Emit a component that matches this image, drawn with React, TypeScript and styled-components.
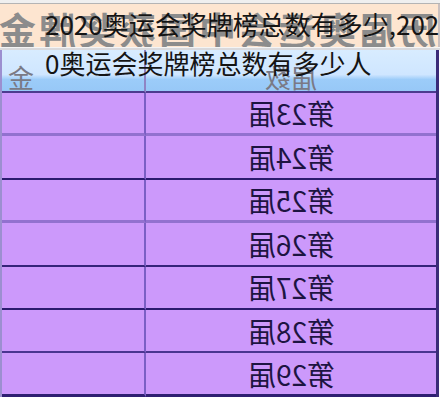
import React from "react";
import styled, { createGlobalStyle } from "styled-components";

const Global = createGlobalStyle`
  html, body { margin: 0; padding: 0; background: #ffffff; }
  body { font-family: "Noto Sans CJK SC", "Noto Sans", sans-serif; }
`;

const Frame = styled.div`
  position: relative;
  width: 440px;
  height: 400px;
  overflow: hidden;
  background: #ffffff;
  display: flex;
  flex-direction: column;
`;

const TopStrip = styled.div`
  height: 3px;
  background: #efefef;
  border-bottom: 1px solid #b4b4b4;
  flex: none;
`;

const Banner = styled.div`
  height: 43px;
  flex: none;
  background: #fde5d0;
  display: flex;
  align-items: center;
  overflow: hidden;
  border-right: 2px solid #c9c0c0;
`;

const Mirror = styled.span`
  display: inline-block;
  transform: scaleX(-1);
  white-space: nowrap;
`;

const BannerTitle = styled(Mirror)`
  font-family: "Noto Sans CJK SC", sans-serif;
  font-weight: 700;
  font-size: 37px;
  letter-spacing: 3px;
  color: #8c8c8c;
  margin-left: -4px;
  margin-top: 6px;
`;

const Separator = styled.div`
  height: 3px;
  flex: none;
  background: #d9d9dc;
  border-top: 1px solid #f4f4f4;
  box-sizing: border-box;
`;

const Table = styled.div`
  display: grid;
  grid-template-columns: 144px 1fr;
  border-left: 2px solid #9c8fd0;
  border-right: 3px solid #3a2b78;
  margin-right: 1px;
  flex: none;
`;

const HeadCell = styled.div<{ $first?: boolean }>`
  height: 43px;
  box-sizing: border-box;
  background: linear-gradient(#d8ecff 0%, #cfe6ff 60%, #9cccf9 72%, #97c8f7 100%);
  border-bottom: 2px solid #4d3b8f;
  border-right: ${(p) => (p.$first ? "2px solid #8f84c4" : "none")};
  display: flex;
  align-items: center;
  justify-content: ${(p) => (p.$first ? "flex-start" : "center")};
  overflow: hidden;
`;

const HeadText = styled(Mirror)`
  font-size: 26px;
  color: #7a7a86;
  line-height: 1;
  margin-top: 12px;
`;

const Cell = styled.div<{ $first?: boolean; $line: string; $w: number }>`
  height: 43.4px;
  box-sizing: border-box;
  background: #cc99fb;
  border-bottom: ${(p) => p.$w}px solid ${(p) => p.$line};
  border-right: ${(p) => (p.$first ? "2px solid #7b5fc4" : "none")};
  display: flex;
  align-items: center;
  justify-content: center;
`;

const CellText = styled(Mirror)`
  font-size: 28px;
  color: #1d1442;
  line-height: 1;
  margin-left: 2px;
`;

const Overlay = styled.div`
  position: absolute;
  top: 4px;
  left: 45px;
  right: 0;
  font-family: "Noto Sans CJK SC", sans-serif;
  font-size: 26px;
  line-height: 39px;
  color: #141414;
  word-break: break-all;
`;

const rows: { label: string; line: string; w: number }[] = [
  { label: "第23届", line: "#9271cf", w: 3 },
  { label: "第24届", line: "#2b1b6e", w: 2 },
  { label: "第25届", line: "#9271cf", w: 3 },
  { label: "第26届", line: "#35247a", w: 2 },
  { label: "第27届", line: "#2b1b6e", w: 2 },
  { label: "第28届", line: "#4a3590", w: 2 },
  { label: "第29届", line: "#2f1f72", w: 3 },
];

export default function App() {
  return (
    <Frame>
      <Global />
      <TopStrip />
      <Banner>
        <BannerTitle>历届奥运会中国获奖牌金</BannerTitle>
      </Banner>
      <Separator />
      <Table>
        <HeadCell $first>
          <HeadText style={{ marginLeft: 6 }}>金</HeadText>
        </HeadCell>
        <HeadCell>
          <HeadText>届数</HeadText>
        </HeadCell>
        {rows.map((r) => (
          <React.Fragment key={r.label}>
            <Cell $first $line={r.line} $w={r.w} />
            <Cell $line={r.line} $w={r.w}>
              <CellText>{r.label}</CellText>
            </Cell>
          </React.Fragment>
        ))}
      </Table>
      <Overlay>2020奥运会奖牌榜总数有多少,2020奥运会奖牌榜总数有多少人</Overlay>
    </Frame>
  );
}
